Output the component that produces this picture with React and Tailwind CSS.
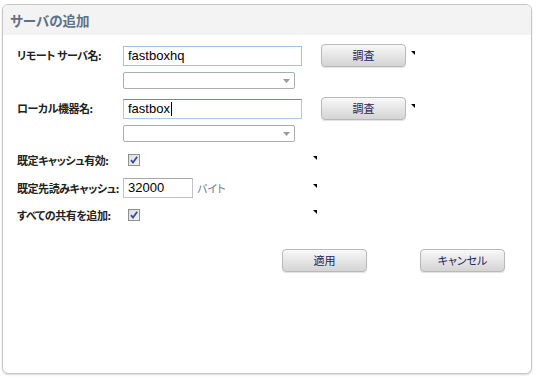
const jp = "font-['Noto_Sans_CJK_JP','Noto_Sans',sans-serif] [font-feature-settings:'palt']";

function Marker() {
  return (
    <svg width="4" height="4" viewBox="0 0 4 4" className="self-start shrink-0">
      <polygon points="0,0 4,0 4,4" fill="#000" />
    </svg>
  );
}

function Btn({ children, className = '' }) {
  return (
    <button
      className={`h-[23px] w-[85px] rounded-[4px] border border-[#b9b9b9] bg-gradient-to-b from-[#f8f8f8] to-[#d4d4d4] text-[11px] text-[#25255a] shadow-[0_1px_1px_rgba(0,0,0,0.12)] ${jp} ${className}`}
    >
      {children}
    </button>
  );
}

function Select() {
  return (
    <div className="ml-[106px] flex h-[17px] w-[172px] items-center justify-end rounded-[2px] border border-[#acacac] bg-white pr-[4px]">
      <svg width="7" height="4" viewBox="0 0 7 4">
        <polygon points="0,0 7,0 3.5,4" fill="#9a9a9a" />
      </svg>
    </div>
  );
}

function Check() {
  return (
    <svg width="12" height="12" viewBox="0 0 12 12" className="ml-[5px]">
      <defs>
        <linearGradient id="cb" x1="0" y1="0" x2="1" y2="1">
          <stop offset="0" stopColor="#dcdcdc" />
          <stop offset="1" stopColor="#f4f4f4" />
        </linearGradient>
      </defs>
      <rect x="0.5" y="0.5" width="11" height="11" fill="url(#cb)" stroke="#8e8f8f" />
      <path d="M3 6.2 L5 8.6 L9.2 2.8" fill="none" stroke="#3a4d9c" strokeWidth="1.8" />
    </svg>
  );
}

function Label({ children }) {
  return (
    <div className={`w-[106px] shrink-0 whitespace-nowrap text-[11px] font-bold tracking-[-0.45px] text-[#222] ${jp}`}>{children}</div>
  );
}

export default function App() {
  return (
    <div className="h-[379px] w-[539px] bg-white pl-[2px] pt-[4px]">
      <div className="flex h-[370px] w-[530px] flex-col overflow-hidden rounded-[6px] border border-[#c6c6c6] bg-white shadow-[0_1px_2px_rgba(0,0,0,0.15)]">
        <div className="flex h-[30px] items-center bg-[#f3f3f3] pl-[7px]">
          <span className={`text-[13.5px] font-bold text-[#5f7185] ${jp}`}>サーバの追加</span>
        </div>

        <div className="flex flex-col pl-[14px] pt-[9px]">
          <div className="flex h-[23px] items-center">
            <Label>リモート サーバ名:</Label>
            <div className="flex h-[20px] w-[179px] items-center border border-[#9fc4e6] bg-white pl-[4px] font-['Liberation_Sans',sans-serif] text-[13px] text-black">
              fastboxhq
            </div>
            <Btn className="ml-[19px]">調査</Btn>
            <div className="ml-[5px] mt-[7px] self-start">
              <Marker />
            </div>
          </div>
          <div className="mt-[5px]">
            <Select />
          </div>

          <div className="mt-[8px] flex h-[23px] items-center">
            <Label>ローカル機器名:</Label>
            <div className="flex h-[20px] w-[179px] items-center border border-[#a9cbea] border-t-[#5d8fc4] bg-white pl-[4px] font-['Liberation_Sans',sans-serif] text-[13px] text-black">
              fastbox<span className="ml-[1px] h-[14px] w-[1px] bg-black" />
            </div>
            <Btn className="ml-[19px]">調査</Btn>
            <div className="ml-[5px] mt-[7px] self-start">
              <Marker />
            </div>
          </div>
          <div className="mt-[5px]">
            <Select />
          </div>

          <div className="mt-[8px] flex h-[20px] items-center">
            <Label>既定キャッシュ有効:</Label>
            <div className="w-[190px]">
              <Check />
            </div>
            <div className="mt-[6px] self-start">
              <Marker />
            </div>
          </div>

          <div className="mt-[8px] flex h-[20px] items-center">
            <Label>既定先読みキャッシュ:</Label>
            <div className="flex w-[190px] items-center">
              <div className="flex h-[20px] w-[70px] items-center border border-[#c2c2c2] border-t-[#a8a8a8] bg-white pl-[4px] font-['Liberation_Sans',sans-serif] text-[13px] text-black">
                32000
              </div>
              <span className={`ml-[4px] text-[11px] text-[#6c7b8a] ${jp}`}>バイト</span>
            </div>
            <div className="mt-[6px] self-start">
              <Marker />
            </div>
          </div>

          <div className="mt-[7px] flex h-[20px] items-center">
            <Label>すべての共有を追加:</Label>
            <div className="w-[190px]">
              <Check />
            </div>
            <div className="mt-[5px] self-start">
              <Marker />
            </div>
          </div>

          <div className="mt-[24px] flex justify-end gap-[53px] pr-[26px]">
            <Btn>適用</Btn>
            <Btn>キャンセル</Btn>
          </div>
        </div>
      </div>
    </div>
  );
}
